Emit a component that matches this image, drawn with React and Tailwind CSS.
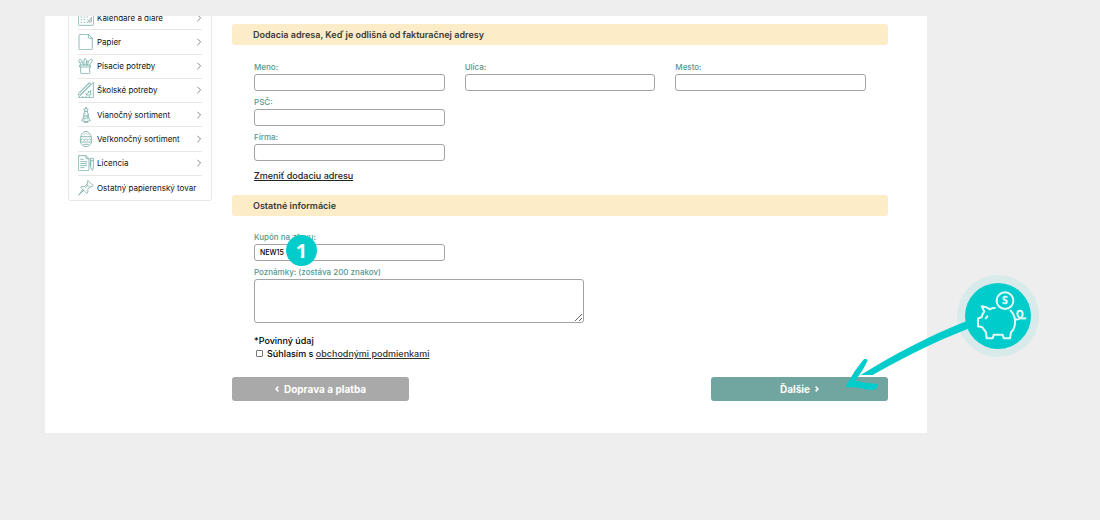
import { useState } from "react";

const MAX_NOTE = 200;

const categories = [
  { label: "Kalendáre a diáre", icon: CalendarIcon, hasChildren: true },
  { label: "Papier", icon: PaperIcon, hasChildren: true },
  { label: "Písacie potreby", icon: PencilCupIcon, hasChildren: true },
  { label: "Školské potreby", icon: RulerIcon, hasChildren: true },
  { label: "Vianočný sortiment", icon: TreeIcon, hasChildren: true },
  { label: "Veľkonočný sortiment", icon: EggIcon, hasChildren: true },
  { label: "Licencia", icon: LicenceIcon, hasChildren: true },
  { label: "Ostatný papierenský tovar", icon: PinIcon, hasChildren: false },
];

const addressFields = [
  { id: "meno", label: "Meno:", className: "col-start-1" },
  { id: "ulica", label: "Ulica:", className: "" },
  { id: "mesto", label: "Mesto:", className: "" },
  { id: "psc", label: "PSČ:", className: "col-start-1" },
  { id: "firma", label: "Firma:", className: "col-start-1" },
];

function LineIcon({ children }) {
  return (
    <svg
      viewBox="0 0 48 48"
      className="size-4 shrink-0 text-[#74aca6]"
      fill="none"
      stroke="currentColor"
      strokeWidth="2.4"
      strokeLinecap="round"
      strokeLinejoin="round"
      aria-hidden="true"
    >
      {children}
    </svg>
  );
}

function CalendarIcon() {
  return (
    <LineIcon>
      <rect x="1" y="4" width="46" height="42" rx="3" />
      <path d="M1 14h46M12 1v7M36 1v7" />
      <path d="M9 21h2M18 21h2M27 21h2M9 29h2M18 29h2M9 37h2M18 37h2M27 37h2M29 29l4 5 8-12M40 24v12h-8" />
    </LineIcon>
  );
}

function PaperIcon() {
  return (
    <LineIcon>
      <path d="M7 1h24l12 12v31q0 3-3 3H6q-3 0-3-3V4q0-3 4-3z" />
      <path d="M31 1v9q0 3 3 3h9" />
    </LineIcon>
  );
}

function PencilCupIcon() {
  return (
    <LineIcon>
      <path d="M6 21h31v6H6zM8 27v17q0 3 3 3h21q3 0 3-3V27" />
      <path d="M9 21L2 8l3-4 6 3 6 14M18 21V6l3-5 4 5v15M28 21l5-13 7-5 4 3-3 6-7 9M29 9l-4 8M8 14l5-2" />
    </LineIcon>
  );
}

function RulerIcon() {
  return (
    <LineIcon>
      <path d="M46 2v45H2z" />
      <path d="M38 26v13H25z" />
      <path d="M2 33L33 2l6 4L8 37l-6 2zM6 32L34 4M30 28l3 2M23 35l3 2M14 43v3M24 43v3M34 43v3" />
    </LineIcon>
  );
}

function TreeIcon() {
  return (
    <LineIcon>
      <path d="M24 1l2 5 5 1-4 3 1 5-4-2-4 2 1-5-4-3 5-1z" />
      <path d="M20 14l-4 12 3 1-8 14q13 6 26 0l-8-14 3-1-4-12M19 43v4h10v-4M17 27q7 4 14-4M15 36q10 2 16-6" />
      <path d="M22 21h1M27 28h1M20 33h1M29 36h1" />
    </LineIcon>
  );
}

function EggIcon() {
  return (
    <LineIcon>
      <path d="M24 1C13 1 7 15 7 27c0 12 8 20 17 20s17-8 17-20C41 15 35 1 24 1z" />
      <path d="M9 17h30M7 33h34M8 28l5-5 5 5 6-5 6 5 5-5 5 5M18 10h1M24 8h1M30 10h1M17 40h14" />
    </LineIcon>
  );
}

function LicenceIcon() {
  return (
    <LineIcon>
      <path d="M4 2h20l9 9v33q0 3-3 3H4q-3 0-3-3V5q0-3 3-3zM24 2v9h9" />
      <path d="M8 13h8M8 20h18M8 26h18M8 32h18M8 38h10M39 10h7v29l-3 7-4-7zM39 17h7M37 20v12" />
    </LineIcon>
  );
}

function PinIcon() {
  return (
    <LineIcon>
      <path d="M30 2l16 15-5 3-3-1-9 10 1 8-4 3-18-18 4-3 8 1 9-10-1-4z" />
      <path d="M17 31L2 46l13-18M25 12l11 11M22 24l7-8" />
    </LineIcon>
  );
}

function ChevronIcon() {
  return (
    <svg viewBox="0 0 6 10" className="h-2 w-1.5 shrink-0 text-[#666]" fill="none" stroke="currentColor" aria-hidden="true">
      <path d="M1 1l4 4-4 4" />
    </svg>
  );
}

function ButtonArrow({ left = false }) {
  return (
    <svg
      viewBox="0 0 4 6"
      className="h-1.5 w-1 shrink-0"
      fill="none"
      stroke="currentColor"
      strokeWidth="1.5"
      aria-hidden="true"
    >
      <path d={left ? "M3.4 .6L1 3l2.4 2.4" : "M.6 .6L3 3 .6 5.4"} />
    </svg>
  );
}

function SectionHeading({ children }) {
  return (
    <h2 className="rounded-[3px] bg-[#fdecc8] pl-[21px] text-[9px] leading-[21px] font-semibold text-[#3a3a3a]">
      {children}
    </h2>
  );
}

function Field({ id, label, className, children, ...inputProps }) {
  return (
    <div className={className}>
      <label htmlFor={id} className="block text-[8px] leading-[13px] font-medium text-[#569791]">
        {label}
      </label>
      <input
        id={id}
        name={id}
        type="text"
        className="block h-[17px] w-full rounded-[3px] border border-[#a3a3a3] bg-white px-[5px] text-[7px] font-medium text-black"
        {...inputProps}
      />
      {children}
    </div>
  );
}

function CategoryMenu() {
  return (
    <nav className="w-36 shrink-0 self-start overflow-hidden rounded-b-[3px] border-x border-b border-[#e8e8e8] px-[9px]">
      <ul className="-mt-2.5 grid h-[194px] auto-rows-fr divide-y divide-[#e8e8e8]">
        {categories.map(({ label, icon: Icon, hasChildren }) => (
          <li key={label} className="grid">
            <a href="#" className="flex items-center gap-[3px] text-[8px] whitespace-nowrap text-[#111]">
              <Icon />
              <span className="grow">{label}</span>
              {hasChildren && <ChevronIcon />}
            </a>
          </li>
        ))}
      </ul>
    </nav>
  );
}

// Arrow leading from the savings badge down to the submit button
function SavingsCallout() {
  return (
    <svg
      viewBox="0 0 200 130"
      className="pointer-events-none absolute top-[254px] -right-[113px] h-[130px] w-[200px]"
      aria-hidden="true"
    >
      <circle cx="158" cy="46" r="41" fill="#d8ebea" />
      <g transform="translate(0 -10) scale(0.3333)" fill="#00cdcb">
        <path d="M382 182C270 226 160 284 62 345h36C195 291 290 243 388 205z" />
        <path d="M70 299q8-7 13 2c-10 24-24 42-36 61q30 8 66 10-1 14-8 16-14 4-34-2-28-6-54-5 2-8 6-13 20-36 47-69z" />
      </g>
      <circle cx="158" cy="46" r="33" fill="#00cdcb" />
      <g
        transform="translate(110 -5) scale(0.3333)"
        fill="none"
        stroke="#e4fbfa"
        strokeWidth="6"
        strokeLinecap="round"
        strokeLinejoin="round"
      >
        <path d="M134 129q-8-1-14 4-11-8-25-9l8 16q-6 6-8 16l-11 5v23l13 3q5 8 11 15l2 18h18l3-11h27l3 11h19l3-18c15-14 18-45-1-65" />
        <path d="M198 163c12 2 21-8 20-17-1-11-15-11-16-1 0 10 8 18 24 15" />
        <path d="M107 160l5-6" />
        <circle cx="165" cy="107" r="25" />
        <text
          x="165"
          y="118"
          textAnchor="middle"
          className="font-[Open_Sans,sans-serif] text-[32px] font-bold"
          fill="#e4fbfa"
          stroke="#e4fbfa"
          strokeWidth="1"
        >
          S
        </text>
      </g>
    </svg>
  );
}

function CheckoutForm() {
  const [coupon, setCoupon] = useState("NEW15");
  const [note, setNote] = useState("");
  const [agreed, setAgreed] = useState(false);

  return (
    <form className="grow pt-2" onSubmit={(e) => e.preventDefault()}>
      <SectionHeading>Dodacia adresa, Keď je odlišná od fakturačnej adresy</SectionHeading>
      <div className="px-[22px] pt-4 pb-[13px]">
        <div className="grid grid-cols-3 gap-x-5 gap-y-[5px]">
          {addressFields.map((field) => (
            <Field key={field.id} {...field} />
          ))}
        </div>
        <a href="#" className="mt-2 block w-fit text-[9px] leading-[13px] font-medium text-[#222] underline">
          Zmeniť dodaciu adresu
        </a>
      </div>

      <SectionHeading>Ostatné informácie</SectionHeading>
      <div className="px-[22px] pt-[15px]">
        <div className="grid grid-cols-3 gap-x-5">
          <Field
            id="kupon"
            label="Kupón na zľavu:"
            className="relative"
            value={coupon}
            onChange={(e) => setCoupon(e.target.value)}
          >
            <span className="absolute top-1 left-8 flex size-[31px] items-center justify-center rounded-full bg-[#00cdcb] font-[Open_Sans,sans-serif] text-[20px] font-bold text-white">
              1
            </span>
          </Field>
        </div>
        <label htmlFor="poznamky" className="mt-[5px] block text-[8px] leading-[13px] font-medium text-[#569791]">
          Poznámky: (zostáva {MAX_NOTE - note.length} znakov)
        </label>
        <textarea
          id="poznamky"
          maxLength={MAX_NOTE}
          value={note}
          onChange={(e) => setNote(e.target.value)}
          className="block h-11 w-[54%] rounded-[3px] border border-[#a3a3a3] bg-white px-[5px] text-[7px]"
        />
        <p className="mt-[11px] text-[9px] leading-[13px] font-medium text-black">*Povinný údaj</p>
        <div className="flex items-center gap-1 pl-0.5 text-[9px] leading-[13px] font-medium text-black">
          <input
            id="suhlas"
            type="checkbox"
            checked={agreed}
            onChange={(e) => setAgreed(e.target.checked)}
            className="size-[7px] appearance-none rounded-[1px] border border-[#777] bg-white checked:bg-[#71a5a0]"
          />
          <label htmlFor="suhlas">
            Súhlasím s{" "}
            <a href="#" className="text-[#333] underline">
              obchodnými podmienkami
            </a>
          </label>
        </div>
      </div>

      <div className="mt-[17px] flex justify-between pb-8">
        <button
          type="button"
          className="flex h-6 w-[27%] items-center justify-center gap-[5px] rounded-[3px] bg-[#a9a9a9] text-[10px] font-bold text-white"
        >
          <ButtonArrow left />
          Doprava a platba
        </button>
        <button
          type="submit"
          className="flex h-6 w-[27%] items-center justify-center gap-[5px] rounded-[3px] bg-[#71a5a0] text-[10px] font-bold text-white"
        >
          Ďalšie
          <ButtonArrow />
        </button>
      </div>
    </form>
  );
}

function App() {
  return (
    <div className="min-h-screen bg-[#eee] pt-4 pr-[173px] pl-[45px] font-[Inter,sans-serif]">
      <main className="relative flex gap-5 bg-white pr-[39px] pl-[23px]">
        <CategoryMenu />
        <CheckoutForm />
        <SavingsCallout />
      </main>
    </div>
  );
}

export default App;
